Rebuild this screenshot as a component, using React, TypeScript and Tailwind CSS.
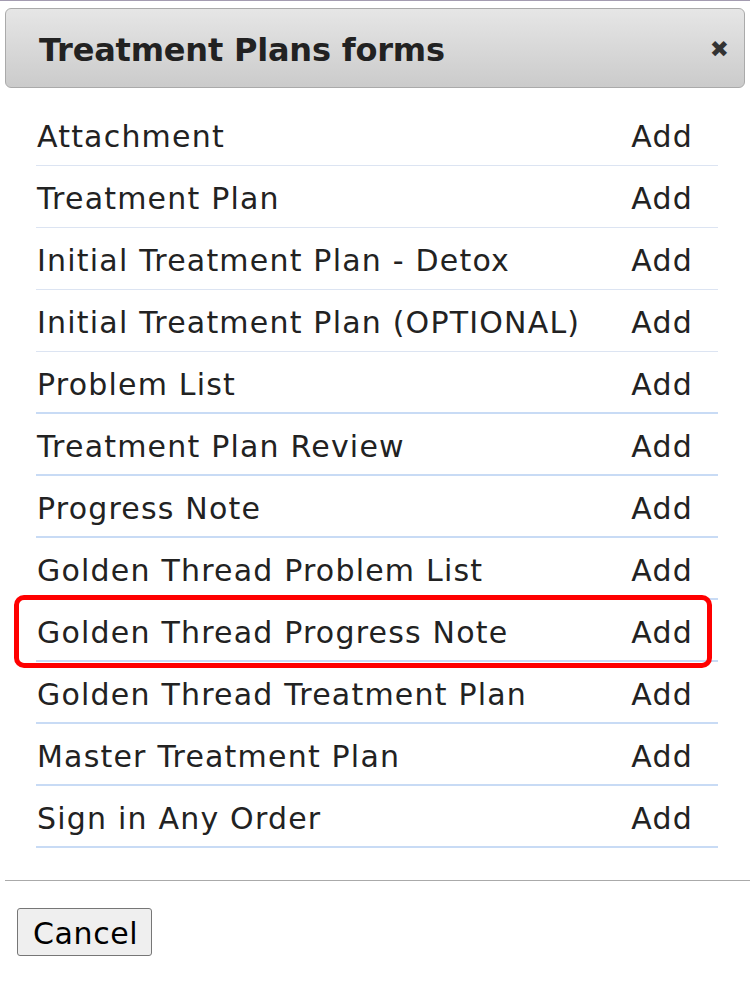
const forms: string[] = [
  "Attachment",
  "Treatment Plan",
  "Initial Treatment Plan - Detox",
  "Initial Treatment Plan (OPTIONAL)",
  "Problem List",
  "Treatment Plan Review",
  "Progress Note",
  "Golden Thread Problem List",
  "Golden Thread Progress Note",
  "Golden Thread Treatment Plan",
  "Master Treatment Plan",
  "Sign in Any Order",
];

const App = () => {
  return (
    <div
      className="relative w-[750px] h-[988px] bg-white border-t border-[#a39bb0] text-[#222]"
      style={{ fontFamily: '"DejaVu Sans", Verdana, sans-serif' }}
    >
      {/* Title bar */}
      <div className="mx-[5px] mt-[7px] h-[80px] flex items-center justify-between rounded-md border border-[#aaaaaa] bg-gradient-to-b from-[#e6e6e6] to-[#cbcbcb] pl-[33px] pr-[15px]">
        <h1 className="pt-[3px] text-[32px] font-bold tracking-[-0.2px] text-[#222]">
          Treatment Plans forms
        </h1>
        <span className="pt-[3px] text-[23px] font-bold text-[#333] leading-none">✖</span>
      </div>

      {/* Forms list */}
      <ul className="mt-[16px] ml-[36px] w-[682px]">
        {forms.map((name, idx) => (
          <li
            key={idx}
            className={
              idx < 4
                ? "h-[62px] flex items-center justify-between border-b border-[#dce4f2] pl-px pr-[25px] pt-[4px] text-[30px] tracking-[1.2px]"
                : "h-[62px] flex items-center justify-between border-b-2 border-[#c8dbf5] pl-px pr-[25px] pt-[4px] text-[30px] tracking-[1.2px]"
            }
          >
            <span>{name}</span>
            <span className="cursor-pointer">Add</span>
          </li>
        ))}
      </ul>

      {/* Highlight */}
      <div className="absolute left-[14px] top-[594px] w-[698px] h-[73px] border-[5px] border-[#ff0000] rounded-[10px]" />

      <div className="mt-[32px] ml-[5px] border-t border-[#aaaaaa]" />

      <div className="px-[17px] pt-[27px]">
        <button className="h-[48px] pl-[15px] pr-[13px] pt-[2px] text-[30px] tracking-[0.6px] text-black bg-[#efefef] border border-[#767676] rounded-[3px]">
          Cancel
        </button>
      </div>
    </div>
  );
};

export default App;
